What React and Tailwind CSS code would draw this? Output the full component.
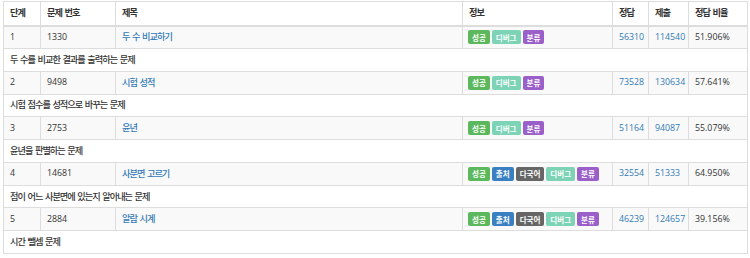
const problems = [
  {
    step: 1,
    id: 1330,
    title: "두 수 비교하기",
    tags: ["성공", "디버그", "분류"],
    solved: 56310,
    submit: 114540,
    ratio: "51.906%",
    desc: "두 수를 비교한 결과를 출력하는 문제",
  },
  {
    step: 2,
    id: 9498,
    title: "시험 성적",
    tags: ["성공", "디버그", "분류"],
    solved: 73528,
    submit: 130634,
    ratio: "57.641%",
    desc: "시험 점수를 성적으로 바꾸는 문제",
  },
  {
    step: 3,
    id: 2753,
    title: "윤년",
    tags: ["성공", "디버그", "분류"],
    solved: 51164,
    submit: 94087,
    ratio: "55.079%",
    desc: "윤년을 판별하는 문제",
  },
  {
    step: 4,
    id: 14681,
    title: "사분면 고르기",
    tags: ["성공", "출처", "다국어", "디버그", "분류"],
    solved: 32554,
    submit: 51333,
    ratio: "64.950%",
    desc: "점이 어느 사분면에 있는지 알아내는 문제",
  },
  {
    step: 5,
    id: 2884,
    title: "알람 시계",
    tags: ["성공", "출처", "다국어", "디버그", "분류"],
    solved: 46239,
    submit: 124657,
    ratio: "39.156%",
    desc: "시간 뺄셈 문제",
  },
];

const tagColor = {
  성공: "bg-[#5cb85c]",
  출처: "bg-[#3a7fc1]",
  다국어: "bg-[#666666]",
  디버그: "bg-[#7dd3b6]",
  분류: "bg-[#9b5fc9]",
};

const ko = "font-['Noto_Sans_CJK_KR',sans-serif] text-[9.2px] tracking-[-1px] [word-spacing:1.5px]";
const num = "font-['Open_Sans','Noto_Sans_CJK_KR',sans-serif] text-[8.8px]";

function Tag({ name }) {
  return (
    <span
      className={`${tagColor[name]} inline-flex h-[14px] items-center rounded-[2px] px-[4px] text-[7.5px] font-bold text-white font-['Noto_Sans_CJK_KR',sans-serif]`}
    >
      {name}
    </span>
  );
}

function App() {
  return (
    <div className="bg-white pl-[3px] pt-[1px] text-[#333]">
      <table className="w-[744px] table-fixed border-collapse border border-[#ddd]">
        <colgroup>
          <col className="w-[37px]" />
          <col className="w-[75px]" />
          <col className="w-[347px]" />
          <col className="w-[150px]" />
          <col className="w-[36px]" />
          <col className="w-[40px]" />
          <col className="w-[59px]" />
        </colgroup>
        <thead>
          <tr className={`h-[24px] border-b-2 border-[#ddd] text-left font-bold ${ko}`}>
            <th className="border-r border-[#ddd] px-[6px]">단계</th>
            <th className="border-r border-[#ddd] px-[6px]">문제 번호</th>
            <th className="border-r border-[#ddd] px-[6px]">제목</th>
            <th className="border-r border-[#ddd] px-[6px]">정보</th>
            <th className="border-r border-[#ddd] px-[6px]">정답</th>
            <th className="border-r border-[#ddd] px-[6px]">제출</th>
            <th className="px-[6px]">정답 비율</th>
          </tr>
        </thead>
        <tbody>
          {problems.map((p) => (
            <>
              <tr key={`r${p.id}`} className="h-[23px] border-t border-[#ddd] bg-[#f9f9f9]">
                <td className={`border-r border-[#ddd] px-[6px] ${num}`}>{p.step}</td>
                <td className={`border-r border-[#ddd] px-[6px] ${num}`}>{p.id}</td>
                <td className={`border-r border-[#ddd] px-[6px] font-medium text-[#337ab7] ${ko}`}>{p.title}</td>
                <td className="border-r border-[#ddd] px-[5px]">
                  <div className="flex gap-[2px]">
                    {p.tags.map((t) => (
                      <Tag key={t} name={t} />
                    ))}
                  </div>
                </td>
                <td className={`border-r border-[#ddd] px-[6px] text-[#337ab7] ${num}`}>{p.solved}</td>
                <td className={`border-r border-[#ddd] px-[6px] text-[#337ab7] ${num}`}>{p.submit}</td>
                <td className={`px-[6px] ${num}`}>{p.ratio}</td>
              </tr>
              <tr key={`d${p.id}`} className="h-[22.6px] border-t border-[#ddd] bg-white">
                <td colSpan={7} className={`px-[6px] font-medium ${ko}`}>
                  {p.desc}
                </td>
              </tr>
            </>
          ))}
        </tbody>
      </table>
    </div>
  );
}

export default App;
